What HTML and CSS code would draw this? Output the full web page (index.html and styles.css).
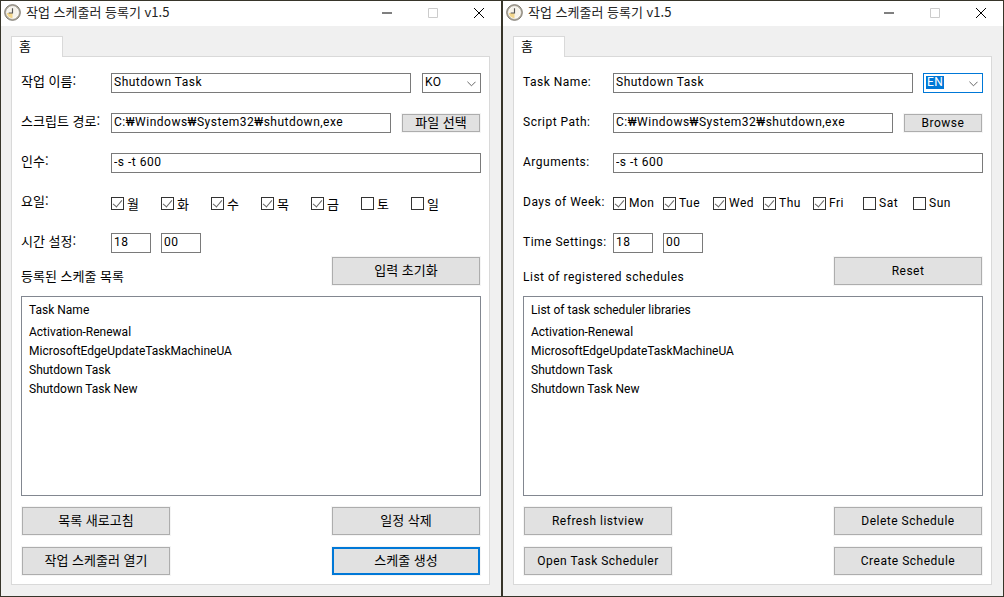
FILE: index.html
```html
<!DOCTYPE html>
<html lang="ko">
<head>
    <meta charset="UTF-8">
    <meta name="viewport" content="width=device-width, initial-scale=1.0">
    <title>작업 스케줄러 등록기</title>
    <link rel="stylesheet" href="styles.css">
</head>
<body>

<div class="window">
    <div class="titlebar">
        <svg class="app-icon" viewBox="0 0 18 18"><circle cx="9" cy="9" r="8.3" fill="#b9b4a6" stroke="#77736a"/><circle cx="9" cy="9" r="6.2" fill="#f6f3ea" stroke="#fff"/><path d="M9 9.5V15A6 6 0 0 1 3 9.5Z" fill="#f2d68c"/><path d="M9 4.5V9.5H5" fill="none" stroke="#555" stroke-width="1.2"/></svg>
        <span class="title ko">작업 스케줄러 등록기 v1.5</span>
        <svg class="win-btn min" viewBox="0 0 10 10"><path d="M0 5H10" stroke="#000"/></svg>
        <svg class="win-btn max" viewBox="0 0 10 10"><path d="M.5 .5H9.5V9.5H.5Z" fill="none" stroke="#ccc"/></svg>
        <svg class="win-btn close" viewBox="0 0 10 10"><path d="M0 0L10 10M10 0L0 10" stroke="#000"/></svg>
    </div>
    <div class="client">
        <div class="tab ko">홈</div>
        <div class="panel">
            <div class="row">
                <label class="field-label ko">작업 이름:</label>
                <input class="text wide-name" type="text" value="Shutdown Task">
                <div class="combo"><span>KO</span><svg viewBox="0 0 10 6"><path d="M.5 .5L5 5L9.5 .5" fill="none" stroke="#555"/></svg></div>
            </div>
            <div class="row">
                <label class="field-label ko">스크립트 경로:</label>
                <input class="text wide-path" type="text" value="C:₩Windows₩System32₩shutdown,exe">
                <button class="btn small ko">파일 선택</button>
            </div>
            <div class="row">
                <label class="field-label ko">인수:</label>
                <input class="text wide-args" type="text" value="-s -t 600">
            </div>
            <div class="row">
                <label class="field-label ko">요일:</label>
                <div class="days ko">
                    <label class="day"><input type="checkbox" checked>월</label>
                    <label class="day"><input type="checkbox" checked>화</label>
                    <label class="day"><input type="checkbox" checked>수</label>
                    <label class="day"><input type="checkbox" checked>목</label>
                    <label class="day"><input type="checkbox" checked>금</label>
                    <label class="day"><input type="checkbox">토</label>
                    <label class="day"><input type="checkbox">일</label>
                </div>
            </div>
            <div class="row">
                <label class="field-label ko">시간 설정:</label>
                <input class="text time" type="text" value="18">
                <input class="text time" type="text" value="00">
            </div>
            <div class="list-head">
                <span class="ko">등록된 스케줄 목록</span>
                <button class="btn ko">입력 초기화</button>
            </div>
            <div class="listview">
                <div class="list-col">Task Name</div>
                <div>Activation-Renewal</div>
                <div>MicrosoftEdgeUpdateTaskMachineUA</div>
                <div>Shutdown Task</div>
                <div>Shutdown Task New</div>
            </div>
            <div class="actions">
                <button class="btn ko">목록 새로고침</button>
                <button class="btn ko">일정 삭제</button>
                <button class="btn ko">작업 스케줄러 열기</button>
                <button class="btn focused ko">스케줄 생성</button>
            </div>
        </div>
    </div>
</div>

<div class="window">
    <div class="titlebar">
        <svg class="app-icon" viewBox="0 0 18 18"><circle cx="9" cy="9" r="8.3" fill="#b9b4a6" stroke="#77736a"/><circle cx="9" cy="9" r="6.2" fill="#f6f3ea" stroke="#fff"/><path d="M9 9.5V15A6 6 0 0 1 3 9.5Z" fill="#f2d68c"/><path d="M9 4.5V9.5H5" fill="none" stroke="#555" stroke-width="1.2"/></svg>
        <span class="title ko">작업 스케줄러 등록기 v1.5</span>
        <svg class="win-btn min" viewBox="0 0 10 10"><path d="M0 5H10" stroke="#000"/></svg>
        <svg class="win-btn max" viewBox="0 0 10 10"><path d="M.5 .5H9.5V9.5H.5Z" fill="none" stroke="#ccc"/></svg>
        <svg class="win-btn close" viewBox="0 0 10 10"><path d="M0 0L10 10M10 0L0 10" stroke="#000"/></svg>
    </div>
    <div class="client">
        <div class="tab ko">홈</div>
        <div class="panel">
            <div class="row">
                <label class="field-label">Task Name:</label>
                <input class="text wide-name" type="text" value="Shutdown Task">
                <div class="combo active"><span>EN</span><svg viewBox="0 0 10 6"><path d="M.5 .5L5 5L9.5 .5" fill="none" stroke="#555"/></svg></div>
            </div>
            <div class="row">
                <label class="field-label">Script Path:</label>
                <input class="text wide-path" type="text" value="C:₩Windows₩System32₩shutdown,exe">
                <button class="btn small">Browse</button>
            </div>
            <div class="row">
                <label class="field-label">Arguments:</label>
                <input class="text wide-args" type="text" value="-s -t 600">
            </div>
            <div class="row">
                <label class="field-label">Days of Week:</label>
                <div class="days">
                    <label class="day"><input type="checkbox" checked>Mon</label>
                    <label class="day"><input type="checkbox" checked>Tue</label>
                    <label class="day"><input type="checkbox" checked>Wed</label>
                    <label class="day"><input type="checkbox" checked>Thu</label>
                    <label class="day"><input type="checkbox" checked>Fri</label>
                    <label class="day"><input type="checkbox">Sat</label>
                    <label class="day"><input type="checkbox">Sun</label>
                </div>
            </div>
            <div class="row">
                <label class="field-label">Time Settings:</label>
                <input class="text time" type="text" value="18">
                <input class="text time" type="text" value="00">
            </div>
            <div class="list-head">
                <span>List of registered schedules</span>
                <button class="btn">Reset</button>
            </div>
            <div class="listview">
                <div class="list-col">List of task scheduler libraries</div>
                <div>Activation-Renewal</div>
                <div>MicrosoftEdgeUpdateTaskMachineUA</div>
                <div>Shutdown Task</div>
                <div>Shutdown Task New</div>
            </div>
            <div class="actions">
                <button class="btn">Refresh listview</button>
                <button class="btn">Delete Schedule</button>
                <button class="btn">Open Task Scheduler</button>
                <button class="btn">Create Schedule</button>
            </div>
        </div>
    </div>
</div>

</body>
</html>
```

FILE: styles.css
```css
html, body {
    height: 100%;
}
body {
    margin: 0;
    padding: 1px 0 1px 1px;
    box-sizing: border-box;
    height: 597px;
    overflow: hidden;
    display: flex;
    gap: 2px;
    background-color: #37352a;
    font-family: Roboto, "Noto Sans CJK KR", sans-serif;
    font-size: 12px;
    letter-spacing: .5px;
    color: #000;
}
.ko {
    font-family: "Noto Sans CJK KR", sans-serif;
    font-size: 13px;
    letter-spacing: 0;
}
.window {
    width: 500px;
    flex: none;
    display: flex;
    flex-direction: column;
    background-color: #f0f0f0;
}
.titlebar {
    height: 25px;
    box-sizing: border-box;
    flex: none;
    display: flex;
    align-items: center;
    background-color: #fff;
    padding: 0 0 2px 3px;
}
.app-icon {
    width: 17px;
    height: 17px;
    margin-right: 5px;
}
.title {
    flex: 1;
    color: #222;
    padding-bottom: 2px;
}
.win-btn {
    flex: none;
    width: 10px;
    height: 10px;
    margin-right: 36px;
}
.win-btn.close {
    margin-right: 17px;
}
.client {
    flex: 1;
    padding: 10px 11px 11px 10px;
    display: flex;
    flex-direction: column;
}
.tab {
    width: 52px;
    height: 21px;
    box-sizing: border-box;
    background-color: #fff;
    border: 1px solid #d9d9d9;
    border-bottom: none;
    padding: 0 0 0 7px;
    margin-bottom: -1px;
    position: relative;
    line-height: 17px;
}
.panel {
    flex: 1;
    background-color: #fff;
    border: 1px solid #d9d9d9;
    padding: 16px 0 0 9px;
}
.row {
    height: 20px;
    margin-bottom: 20px;
    display: flex;
    align-items: center;
    gap: 10px;
}
.field-label {
    width: 80px;
    flex: none;
    white-space: nowrap;
    padding-bottom: 3px;
}
.field-label.ko {
    padding-bottom: 5px;
}
.text {
    box-sizing: border-box;
    height: 20px;
    border: 1px solid #7a7a7a;
    padding: 0 2px 3px;
    margin: 0;
    font: inherit;
    letter-spacing: inherit;
    color: #000;
    background-color: #fff;
    outline: none;
}
.wide-name {
    width: 300px;
    margin-right: 1px;
}
.wide-path {
    width: 280px;
    margin-right: 1px;
}
.wide-args {
    width: 370px;
}
.time {
    width: 40px;
}
.combo {
    box-sizing: border-box;
    width: 59px;
    height: 20px;
    border: 1px solid #7a7a7a;
    display: flex;
    align-items: center;
    justify-content: space-between;
    padding: 0 4px 2px 2px;
}
.combo svg {
    width: 9px;
    height: 6px;
    margin-top: 3px;
}
.combo.active {
    border-color: #0078d7;
    width: 60px;
    margin-left: -1px;
}
.combo.active span {
    background-color: #0078d7;
    color: #fff;
    line-height: 13px;
    padding: 0 1px;
}
.days {
    display: flex;
}
.day {
    width: 50px;
    display: flex;
    align-items: center;
    gap: 3px;
}
.day input {
    appearance: none;
    width: 13px;
    height: 13px;
    margin: 0;
    border: 1px solid #333;
    background-color: #fff;
    position: relative;
    flex: none;
}
.day input:checked::after {
    content: "";
    position: absolute;
    left: 3px;
    top: 0;
    width: 4px;
    height: 8px;
    border: solid #666;
    border-width: 0 1.5px 1.5px 0;
    transform: rotate(40deg);
}
.btn {
    box-sizing: border-box;
    width: 148px;
    height: 28px;
    margin: 0;
    padding: 0;
    border: 1px solid #adadad;
    outline: 1px solid #f5f5f5;
    background-color: #e1e1e1;
    font-family: inherit;
    font-size: inherit;
    letter-spacing: inherit;
    color: #000;
}
.btn.ko {
    font-family: "Noto Sans CJK KR", sans-serif;
    font-size: 13px;
    letter-spacing: 0;
    padding-bottom: 4px;
}
.btn.small {
    width: 78px;
    height: 18px;
    line-height: 14px;
}
.btn.focused {
    border: 2px solid #0078d7;
}
.list-head {
    display: flex;
    justify-content: space-between;
    align-items: flex-end;
    width: 459px;
    height: 28px;
    margin-top: -16px;
    line-height: 18px;
}
.list-head span:not(.ko) {
    line-height: 16px;
}
.listview {
    box-sizing: border-box;
    width: 460px;
    height: 200px;
    margin-top: 11px;
    border: 1px solid #828790;
    padding: 4px 7px;
    line-height: 19px;
    letter-spacing: 0;
}
.list-col {
    margin-bottom: 3px;
}
.actions {
    width: 459px;
    margin-top: 11px;
    display: grid;
    grid-template-columns: 148px 148px;
    justify-content: space-between;
    row-gap: 12px;
    padding-left: 1px;
    box-sizing: border-box;
}
```
